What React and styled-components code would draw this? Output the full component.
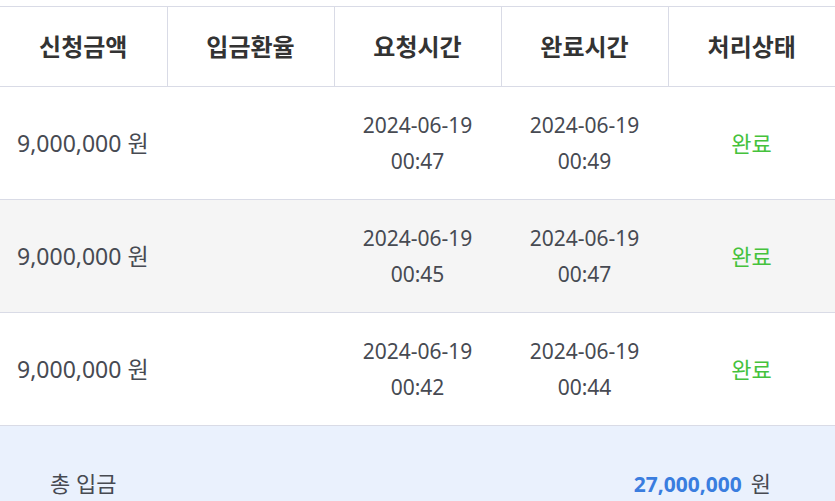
import styled, { createGlobalStyle } from "styled-components";

const GlobalStyle = createGlobalStyle`
	html, body {
		margin: 0;
		padding: 0;
		background: #ffffff;
		overflow: hidden;
	}
	body {
		font-family: "Noto Sans", "Noto Sans CJK KR", sans-serif;
	}
`;

const Page = styled.div`
	width: 835px;
	padding-top: 6px;
`;

// 입금 내역 테이블
const Table = styled.table`
	width: 100%;
	border-collapse: collapse;
	table-layout: fixed;
	border-top: 1px solid #d9dbe6;
`;

const HeadCell = styled.th`
	height: 79px;
	padding: 0;
	font-size: 24px;
	line-height: 30px;
	font-weight: 700;
	color: #333333;
	text-align: center;
	border-bottom: 1px solid #d9dbe6;
	& + & {
		border-left: 1px solid #d9dbe6;
	}
`;

const Row = styled.tr`
	height: 113px;
	background-color: ${({ $alt }) => ($alt ? "#f5f5f5" : "#ffffff")};
	border-bottom: 1px solid #d9dbe6;
`;

const Cell = styled.td`
	padding: 0 0 0 ${({ $left }) => ($left ? "17px" : "0")};
	font-size: ${({ $left }) => ($left ? "23px" : "21px")};
	line-height: 36px;
	color: #474a52;
	text-align: ${({ $left }) => ($left ? "left" : "center")};
	vertical-align: middle;
`;

const Status = styled.span`
	color: #45c23c;
	font-size: 22px;
`;

// 총 입금 합계
const Total = styled.div`
	display: flex;
	justify-content: space-between;
	align-items: flex-start;
	height: 120px;
	padding: 42px 64px 0 50px;
	box-sizing: border-box;
	background-color: #eaf1fd;
	font-size: 22px;
	line-height: 30px;
	color: #474a52;
`;

const TotalAmount = styled.span`
	color: #3a7ddf;
	font-size: 21px;
	font-weight: 700;
	margin-right: 9px;
`;

const rows = [
	{ amount: "9,000,000", req: "00:47", done: "00:49" },
	{ amount: "9,000,000", req: "00:45", done: "00:47" },
	{ amount: "9,000,000", req: "00:42", done: "00:44" },
];

export default function App() {
	return (
		<Page>
			<GlobalStyle />
			<Table>
				<thead>
					<tr>
						<HeadCell>신청금액</HeadCell>
						<HeadCell>입금환율</HeadCell>
						<HeadCell>요청시간</HeadCell>
						<HeadCell>완료시간</HeadCell>
						<HeadCell>처리상태</HeadCell>
					</tr>
				</thead>
				<tbody>
					{rows.map((r, i) => (
						<Row key={i} $alt={i % 2 === 1}>
							<Cell $left>{r.amount} 원</Cell>
							<Cell></Cell>
							<Cell>
								2024-06-19
								<br />
								{r.req}
							</Cell>
							<Cell>
								2024-06-19
								<br />
								{r.done}
							</Cell>
							<Cell>
								<Status>완료</Status>
							</Cell>
						</Row>
					))}
				</tbody>
			</Table>
			<Total>
				<span>총 입금</span>
				<span>
					<TotalAmount>27,000,000</TotalAmount>원
				</span>
			</Total>
		</Page>
	);
}
